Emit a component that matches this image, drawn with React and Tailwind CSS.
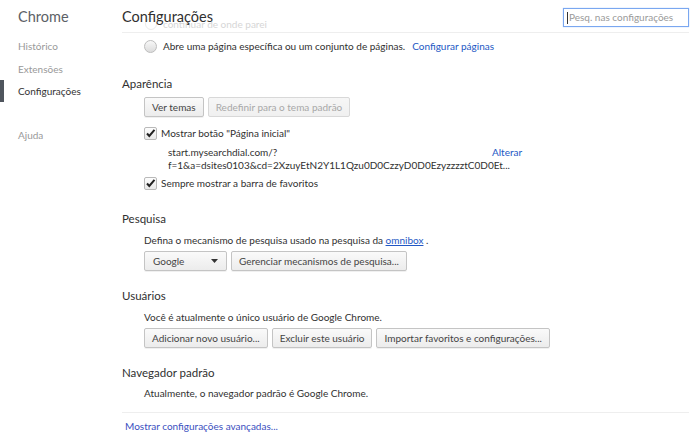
import React from 'react'

const font = { fontFamily: 'Lato, "Noto Sans", Arial, sans-serif' }

function Btn({ children, disabled, className = '' }) {
  return (
    <button
      className={`h-[20px] px-[7px] rounded-[2px] border text-[10px] leading-none whitespace-nowrap bg-gradient-to-b ${
        disabled
          ? 'border-[#d8d8d8] from-[#f6f6f6] to-[#f0f0f0] text-[#a8a8a8]'
          : 'border-[#c4c4c4] from-[#fafafa] to-[#ececec] text-[#444] shadow-[0_1px_0_rgba(0,0,0,0.06)]'
      } ${className}`}
    >
      {children}
    </button>
  )
}

function Check() {
  return (
    <span className="w-[13px] h-[13px] shrink-0 border border-[#b9b9b9] rounded-[2px] bg-gradient-to-b from-[#fdfdfd] to-[#e9e9e9] flex items-center justify-center">
      <svg width="11" height="11" viewBox="0 0 11 11">
        <path d="M2 5.5 L4.3 8 L9.5 1.8" stroke="#222" strokeWidth="2" fill="none" />
      </svg>
    </span>
  )
}

function Section({ title, children, className = '', gap = 'mb-[5px]' }) {
  return (
    <div className={className}>
      <h3 className={`text-[11.5px] leading-[16px] text-[#303030] ${gap}`}>{title}</h3>
      <div className="pl-[22px]">{children}</div>
    </div>
  )
}

export default function App() {
  return (
    <div className="w-[695px] h-[442px] bg-white flex overflow-hidden" style={font}>
      {/* Sidebar */}
      <div className="w-[122px] shrink-0 pt-[6px]">
        <div className="pl-[18px] text-[14.5px] leading-[22px] text-[#5c6166] mb-[7px]">Chrome</div>
        <ul className="text-[10px]">
          <li className="pl-[18px] h-[23px] flex items-center text-[#999]">Histórico</li>
          <li className="pl-[18px] h-[22px] flex items-center text-[#999]">Extensões</li>
          <li className="h-[22px] flex items-center">
            <span className="w-[4px] h-[22px] bg-[#4f555d]"></span>
            <span className="pl-[14px] text-[#333]">Configurações</span>
          </li>
          <li className="pl-[18px] h-[22px] flex items-center text-[#999] mt-[22px]">Ajuda</li>
        </ul>
      </div>

      {/* Main */}
      <div className="flex-1 pr-[6px]">
        {/* header */}
        <div className="relative h-[33px] border-b border-[#eeeeee] flex items-start">
          <div className="absolute left-[23px] top-[17px] flex items-center gap-[6px] text-[10px] leading-[14px] text-[#d6d6d6]">
            <span className="w-[12px] h-[12px] rounded-full border border-[#ececec]"></span>
            continuar de onde parei
          </div>
          <h1 className="relative text-[14.5px] leading-[22px] text-[#303030] pt-[6px]">Configurações</h1>
          <div className="ml-auto mt-[8px] w-[126px] h-[19px] border border-[#7aa7f0] shadow-[0_0_1px_#9cc0ff] flex items-center px-[3px] text-[10px] whitespace-nowrap text-[#9a9a9a] overflow-hidden">
            <span className="w-px h-[12px] bg-[#333] mr-[1px]"></span>
            Pesq. nas configurações
          </div>
        </div>

        <div className="pl-[22px] mt-[6px] h-[14px] flex items-center text-[10px] text-[#303030]">
          <span className="w-[13px] h-[13px] rounded-full border border-[#bdbdbd] bg-gradient-to-b from-[#f8f8f8] to-[#dcdcdc] mr-[6px]"></span>
          Abre uma página específica ou um conjunto de páginas.
          <span className="ml-[7px] text-[#2257c4]">Configurar páginas</span>
        </div>

        <Section title="Aparência" className="mt-[23px]">
          <div className="flex gap-[4px]">
            <Btn>Ver temas</Btn>
            <Btn disabled>Redefinir para o tema padrão</Btn>
          </div>
          <div className="flex items-center h-[14px] gap-[4px] mt-[9px] text-[10px] text-[#303030]">
            <Check />
            Mostrar botão "Página inicial"
          </div>
          <div className="flex mt-[6px] pl-[24px] text-[10px] leading-[13px] text-[#303030]">
            <div className="w-[324px] whitespace-nowrap">
              start.mysearchdial.com/?
              <br />
              f=1&amp;a=dsites0103&amp;cd=2XzuyEtN2Y1L1Qzu0D0CzzyD0D0EzyzzzztC0D0Et...
            </div>
            <span className="text-[#2257c4]">Alterar</span>
          </div>
          <div className="flex items-center h-[14px] gap-[4px] mt-[4px] text-[10px] text-[#303030]">
            <Check />
            Sempre mostrar a barra de favoritos
          </div>
        </Section>

        <Section title="Pesquisa" className="mt-[21px]" gap="mb-[6px]">
          <p className="text-[10px] leading-[14px] text-[#303030]">
            Defina o mecanismo de pesquisa usado na pesquisa da{' '}
            <span className="text-[#2257c4] underline">omnibox</span> .
          </p>
          <div className="flex gap-[4px] mt-[4px]">
            <Btn className="w-[83px] flex items-center justify-between !px-[8px]">
              Google
              <svg width="7" height="4" viewBox="0 0 7 4"><path d="M0 0h7L3.5 4z" fill="#333" /></svg>
            </Btn>
            <Btn>Gerenciar mecanismos de pesquisa...</Btn>
          </div>
        </Section>

        <Section title="Usuários" className="mt-[17px]" gap="mb-[6px]">
          <p className="text-[10px] leading-[14px] text-[#303030]">
            Você é atualmente o único usuário de Google Chrome.
          </p>
          <div className="flex gap-[4px] mt-[4px]">
            <Btn>Adicionar novo usuário...</Btn>
            <Btn>Excluir este usuário</Btn>
            <Btn>Importar favoritos e configurações...</Btn>
          </div>
        </Section>

        <Section title="Navegador padrão" className="mt-[17px]">
          <p className="text-[10px] leading-[14px] text-[#303030]">
            Atualmente, o navegador padrão é Google Chrome.
          </p>
        </Section>

        <div className="mt-[12px] border-t border-[#eeeeee] pt-[6px] pl-[3px] text-[10px] leading-[14px] text-[#3a4fc0]">
          Mostrar configurações avançadas...
        </div>
      </div>
    </div>
  )
}
